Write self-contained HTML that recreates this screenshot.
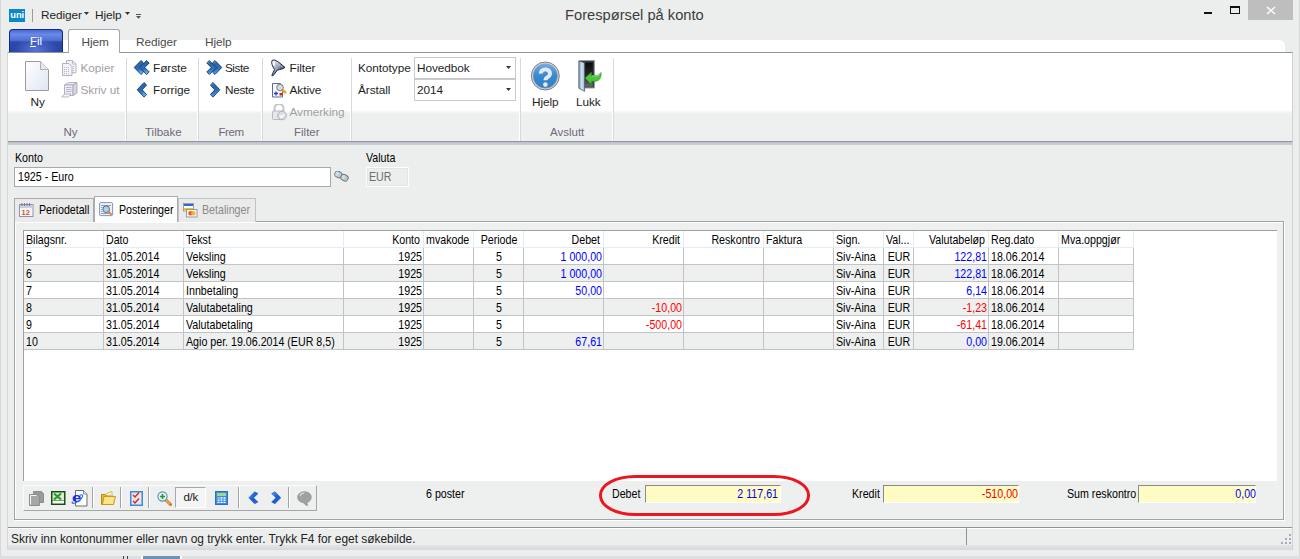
<!DOCTYPE html>
<html><head><meta charset="utf-8">
<style>
*{margin:0;padding:0;box-sizing:border-box}
html,body{width:1300px;height:559px;overflow:hidden;background:#eceeee}
body{position:relative;font-family:"Liberation Sans",sans-serif;color:#000}
.a{position:absolute}
.t{position:absolute;white-space:nowrap;line-height:1}
.r{font-size:11.8px;color:#1e1e1e;letter-spacing:-0.05px}
.g{font-size:12.4px;letter-spacing:0;color:#000;transform:scaleX(0.86);transform-origin:0 0}
.gr{transform-origin:100% 0}
.gc{transform-origin:50% 0}
.dis{color:#a39da6}
.lbl{font-size:11.5px;color:#6c6a78}
.sep{position:absolute;width:1px;background:#d6dadd;box-shadow:-1px 0 0 #fff}
</style></head><body>

<!-- window frame -->
<div class="a" style="left:0;top:0;width:1px;height:559px;background:#d6d8d8"></div>
<div class="a" style="left:7px;top:52px;width:1px;height:498px;background:#d4d7d8"></div>
<div class="a" style="left:1292px;top:52px;width:1px;height:498px;background:#cfd2d3"></div>

<!-- title bar -->
<svg class="a" style="left:9px;top:9px" width="16" height="13"><rect width="16" height="13" fill="#0a88cc"/><text x="1.2" y="9" font-family="Liberation Sans" font-size="8.2" font-weight="bold" textLength="14" lengthAdjust="spacingAndGlyphs" fill="#fff">uni</text></svg>

<div class="a" style="left:32px;top:9px;width:1px;height:13px;background:#9a9a9a"></div>
<div class="t r" style="left:41px;top:9.9px">Rediger</div>
<svg class="a" style="left:84px;top:12px" width="6" height="3"><path d="M0 0h5l-2.5 3z" fill="#333"/></svg>
<div class="t r" style="left:95px;top:9.9px">Hjelp</div>
<svg class="a" style="left:125px;top:12px" width="6" height="3"><path d="M0 0h5l-2.5 3z" fill="#333"/></svg>
<svg class="a" style="left:135.5px;top:14px" width="6" height="6"><path d="M0 0.5h5" stroke="#555" stroke-width="1"/><path d="M0 2h5l-2.5 2.8z" fill="#555"/></svg>
<div class="t" style="left:565px;top:8px;font-size:14.7px;color:#3c3c3c">Forespørsel på konto</div>
<div class="a" style="left:1204px;top:12px;width:8px;height:2px;background:#111"></div>
<div class="a" style="left:1230px;top:6px;width:10px;height:8px;border:1px solid #111;border-top-width:2px"></div>
<div class="a" style="left:1248px;top:0;width:45px;height:20px;background:#bebebe"></div>
<div class="a" style="left:1299px;top:0;width:1px;height:559px;background:#d4d6d6"></div>
<svg class="a" style="left:1266px;top:6px" width="10" height="9"><path d="M1 1l8 7M9 1l-8 7" stroke="#fff" stroke-width="1.4"/></svg>

<!-- tab strip -->
<div class="a" style="left:62px;top:40px;width:1223px;height:13px;background:#fff;border-top-right-radius:6px"></div>
<div class="a" style="left:9px;top:29px;width:54px;height:24px;border-radius:4px 4px 0 0;background:radial-gradient(ellipse 22px 14px at 50% 85%,rgba(90,120,220,0.9),rgba(90,120,220,0) 100%),linear-gradient(#4a6ad4 0%,#6a8ae6 20%,#4e6ed4 45%,#2c48a8 52%,#2a46a4 100%);border:1px solid #0c2a88;border-bottom:none"></div>
<div class="t" style="left:30px;top:36.3px;font-size:11.5px;color:#fff">Fil</div>
<div class="a" style="left:30px;top:46px;width:6px;height:1px;background:#fff"></div>
<div class="a" style="left:68px;top:29px;width:52px;height:24px;background:#fff;border:1px solid #a3a8ae;border-bottom:none;border-radius:3px 3px 0 0;z-index:2"></div>
<div class="t r" style="left:81.5px;top:36.8px;color:#4a4a4a;z-index:3">Hjem</div>
<div class="t r" style="left:136px;top:36.8px;color:#4a4a4a">Rediger</div>
<div class="t r" style="left:205px;top:36.8px;color:#4a4a4a">Hjelp</div>

<!-- ribbon body -->
<div class="a" style="left:8px;top:52px;width:1285px;height:90px;background:#fff;border-top:1px solid #8f979d;border-bottom:1px solid #8f979d;border-right:1px solid #d0d3d5"></div>
<div class="a" style="left:8px;top:111px;width:1284px;height:30px;background:linear-gradient(#fbfbfb 0px,#f2f3f3 1.5px,#eef0f0 3px,#eef0f0 100%)"></div>
<div class="a" style="left:8px;top:142px;width:1284px;height:3px;background:linear-gradient(#bcc1c9,#cdd1d7)"></div>
<div class="sep" style="left:126px;top:58px;height:83px"></div>
<div class="sep" style="left:198px;top:58px;height:83px"></div>
<div class="sep" style="left:262px;top:58px;height:83px"></div>
<div class="sep" style="left:351px;top:58px;height:83px"></div>
<div class="sep" style="left:520px;top:58px;height:83px"></div>
<div class="sep" style="left:613px;top:58px;height:83px"></div>

<!-- group Ny -->
<svg class="a" style="left:25px;top:61px" width="25" height="31"><defs><linearGradient id="dg" x1="0" y1="0" x2="1" y2="1"><stop offset="0" stop-color="#fff"/><stop offset="1" stop-color="#dfe6f2"/></linearGradient></defs><path d="M0.5 0.5h15l8 8v21h-23z" fill="url(#dg)" stroke="#9c9c9c"/><path d="M15.5 0.5v8h8" fill="#e6e9ee" stroke="#b0b0b0"/></svg>
<div class="t r" style="left:30.5px;top:97.2px">Ny</div>
<svg class="a" style="left:62px;top:60px" width="15" height="17"><path d="M4.5 0.5h6l3.5 3.5v8.8h-9.5z" fill="#f2f2f6" stroke="#b4b4c4"/><path d="M10.5 0.5v3.5h3.5" fill="none" stroke="#c0c0cc"/><path d="M0.5 3.5h6.5l3 3v9h-9.5z" fill="#f4f4f8" stroke="#b0b0c0"/><path d="M2 7.5h6M2 9.5h6M2 11.5h6M2 13.5h5" stroke="#b8b8c8" stroke-dasharray="1 1"/><path d="M11 6.5h2M11 8.5h2M11 10.5h2" stroke="#c0c0cc" stroke-dasharray="1 1"/></svg>
<div class="t r dis" style="left:80.5px;top:62.8px">Kopier</div>
<svg class="a" style="left:61px;top:82px" width="17" height="16"><path d="M3.5 3l4-2.5h8.5l-4 2.5z" fill="#e8e8ee" stroke="#b0b0c0" stroke-width="0.9"/><path d="M3.5 3h8.5v10.5h-8.5z" fill="#eeeef4" stroke="#a8a8bc" stroke-width="0.9"/><path d="M12 3l4-2.5v10.5l-4 2.5z" fill="#d6d6e0" stroke="#a8a8bc" stroke-width="0.9"/><path d="M5 5.5h5.5M5 7.5h5.5M5 9.5h5.5" stroke="#b8b8c8"/><path d="M0.8 15l2.7-3h6.5l-2.7 3z" fill="#f4f4f8" stroke="#b0b0c0" stroke-width="0.9"/></svg>
<div class="t r dis" style="left:80.5px;top:84.6px">Skriv ut</div>
<div class="t lbl" style="left:63.5px;top:127.3px">Ny</div>

<!-- group Tilbake -->
<svg class="a" style="left:133px;top:59px" width="19" height="18"><defs><linearGradient id="cg" x1="0" y1="0" x2="0.3" y2="1"><stop offset="0" stop-color="#8cb0d0"/><stop offset="0.3" stop-color="#2c64a8"/><stop offset="0.7" stop-color="#2a70c0"/><stop offset="1" stop-color="#64b0f0"/></linearGradient></defs><path d="M1.2 8.5L8 1.5L10.6 4L6.2 8.5L10.6 13L8 15.5Z" fill="url(#cg)" stroke="#143a6a" stroke-width="0.9" stroke-linejoin="round"/><path d="M6.8 8.5L13.6 1.5L16.2 4L11.8 8.5L16.2 13L13.6 15.5Z" fill="url(#cg)" stroke="#143a6a" stroke-width="0.9" stroke-linejoin="round"/></svg>
<div class="t r" style="left:153px;top:62.8px">Første</div>
<svg class="a" style="left:136px;top:81px" width="13" height="18"><path d="M1.2 8.8L8 1.5L10.6 4L6.2 8.8L10.6 13.6L8 16.1Z" fill="url(#cg)" stroke="#143a6a" stroke-width="0.9" stroke-linejoin="round"/></svg>
<div class="t r" style="left:153px;top:84.6px">Forrige</div>
<div class="t lbl" style="left:145px;top:127.3px">Tilbake</div>

<!-- group Frem -->
<svg class="a" style="left:205px;top:59px" width="19" height="18"><path d="M16.8 8.5L10 1.5L7.4 4L11.8 8.5L7.4 13L10 15.5Z" fill="url(#cg)" stroke="#143a6a" stroke-width="0.9" stroke-linejoin="round"/><path d="M11.2 8.5L4.4 1.5L1.8 4L6.2 8.5L1.8 13L4.4 15.5Z" fill="url(#cg)" stroke="#143a6a" stroke-width="0.9" stroke-linejoin="round"/></svg>
<div class="t r" style="left:225px;top:62.8px;letter-spacing:-0.5px">Siste</div>
<svg class="a" style="left:207.5px;top:81px" width="13" height="18"><path d="M11.8 8.8L5 1.5L2.4 4L6.8 8.8L2.4 13.6L5 16.1Z" fill="url(#cg)" stroke="#143a6a" stroke-width="0.9" stroke-linejoin="round"/></svg>
<div class="t r" style="left:225px;top:84.6px;letter-spacing:-0.3px">Neste</div>
<div class="t lbl" style="left:218.5px;top:127.3px;letter-spacing:-0.4px">Frem</div>

<!-- group Filter -->
<svg class="a" style="left:266px;top:56px" width="22" height="24"><defs><linearGradient id="fg" x1="0" y1="0" x2="1" y2="1"><stop offset="0" stop-color="#f4f6fa"/><stop offset="0.45" stop-color="#9aa6b8"/><stop offset="0.7" stop-color="#3a4866"/><stop offset="1" stop-color="#8896b0"/></linearGradient></defs><path d="M6 4.5C7.5 3.5 10 4 13 6.5C15.5 8.5 17.5 10 19 11.5C17.5 12.8 14.5 13.5 11.5 14L7 19.8L5.8 19.5L8.5 13.5C6.5 10.5 5 7 6 4.5Z" fill="url(#fg)" stroke="#1e2a44" stroke-width="1" stroke-linejoin="round"/><ellipse cx="7.8" cy="7.5" rx="1.1" ry="2.6" fill="#fff"/><path d="M10 6.5l7 5" stroke="#e8ecf4" stroke-width="0.8" stroke-dasharray="1 1"/></svg>
<div class="t r" style="left:289.5px;top:62.8px">Filter</div>
<svg class="a" style="left:272px;top:82px" width="16" height="16"><path d="M0.5 1.5h8l2 2v11.5h-10z" fill="#f6f8fc" stroke="#5a6c98"/><circle cx="8" cy="5.5" r="3.3" fill="#d8dadc" stroke="#7c7c7c"/><path d="M10.5 8l3.5 3" stroke="#f0a020" stroke-width="2.4"/><path d="M2 11.5h4M4 9.5v4" stroke="#2040e0" stroke-width="1.3"/><rect x="7.5" y="11" width="3" height="2.5" fill="#e02020"/></svg>
<div class="t r" style="left:289.5px;top:84.6px">Aktive</div>
<svg class="a" style="left:272px;top:104px" width="15" height="17"><path d="M2.5 7v-2.5a4.5 4.5 0 0 1 9 0v2.5" fill="none" stroke="#c4c4cc" stroke-width="2"/><rect x="0.5" y="7" width="11" height="8.5" rx="1" fill="#e6e6ec" stroke="#b8b8c4"/><circle cx="10" cy="11.5" r="4.3" fill="#dcdce2" stroke="#b0b0bc"/><path d="M7.8 11.5l1.7 1.8l2.6-3" stroke="#fff" stroke-width="1.3" fill="none"/></svg>
<div class="t r dis" style="left:289.5px;top:107.2px">Avmerking</div>
<div class="t lbl" style="left:294px;top:127.3px">Filter</div>

<!-- kontotype group -->
<div class="t r" style="left:358px;top:62.9px">Kontotype</div>
<div class="a" style="left:414px;top:57px;width:102px;height:22px;background:#fff;border:1px solid #c6cace"></div>
<div class="t r" style="left:417px;top:62.9px">Hovedbok</div>
<svg class="a" style="left:506px;top:66px" width="6" height="3"><path d="M0 0h5l-2.5 3z" fill="#333"/></svg>
<div class="t r" style="left:358px;top:84.5px">Årstall</div>
<div class="a" style="left:414px;top:79px;width:102px;height:22px;background:#fff;border:1px solid #c6cace"></div>
<div class="t r" style="left:417px;top:84.5px">2014</div>
<svg class="a" style="left:506px;top:88px" width="6" height="3"><path d="M0 0h5l-2.5 3z" fill="#333"/></svg>

<!-- Avslutt -->
<svg class="a" style="left:530.4px;top:60.8px" width="31" height="31"><defs><linearGradient id="hg" x1="0" y1="0" x2="0" y2="1"><stop offset="0" stop-color="#6eaee6"/><stop offset="0.5" stop-color="#3a86d0"/><stop offset="1" stop-color="#3080cc"/></linearGradient></defs><circle cx="15.3" cy="15" r="14" fill="#d0d4d8" stroke="#70747a" stroke-width="0.9"/><circle cx="15.3" cy="15" r="12.2" fill="url(#hg)" stroke="#9aa0a6" stroke-width="0.5"/><path d="M10.8 12.6a4.6 4.1 0 1 1 7.2 3.3c-1.7 1-2.6 1.6-2.6 3.4" fill="none" stroke="#e4eaf0" stroke-width="3.9"/><circle cx="15.4" cy="23.6" r="2.3" fill="#e4eaf0"/></svg>
<div class="t r" style="left:532px;top:97px">Hjelp</div>
<svg class="a" style="left:578px;top:59px" width="24" height="34"><defs><linearGradient id="dr" x1="0" y1="0" x2="1" y2="0"><stop offset="0" stop-color="#7c98b4"/><stop offset="0.5" stop-color="#cfe2f4"/><stop offset="1" stop-color="#9cb8d2"/></linearGradient><linearGradient id="di" x1="0" y1="0" x2="0" y2="1"><stop offset="0" stop-color="#0a0a0a"/><stop offset="0.6" stop-color="#2a2a2a"/><stop offset="1" stop-color="#6a6a6a"/></linearGradient></defs><path d="M1.5 1.5h15v27.5h-15z" fill="#3e4246" stroke="#9a9ea2" stroke-width="1"/><path d="M6 3.5h8.8v24h-8.8z" fill="url(#di)"/><path d="M0.8 2l5.8 1.8v28.5l-5.8-3z" fill="url(#dr)" stroke="#4a5a6a" stroke-width="0.8"/><path d="M7 19l6.5-5.8v3.3h4.5c1.8 0 3.8-1.2 5-3c0.8 4-1.5 8.8-5.5 8.8h-4v3.2z" fill="#4cc43c" stroke="#2a8a20" stroke-width="0.6"/><path d="M14 17h4c1.5 0 3.2-0.8 4.3-2" fill="none" stroke="#a0f090" stroke-width="0.8"/></svg>
<div class="t r" style="left:576px;top:97px">Lukk</div>
<div class="t lbl" style="left:550px;top:127.3px">Avslutt</div>

<!-- form -->
<div class="t g" style="left:14.5px;top:151.8px">Konto</div>
<div class="a" style="left:14px;top:167px;width:317px;height:20px;background:#fff;border:1px solid #a6a9ab"></div>
<div class="t g" style="left:17.7px;top:170.9px">1925 - Euro</div>
<svg class="a" style="left:333px;top:171px" width="17" height="12"><g transform="rotate(28 8 6)"><rect x="1" y="2" width="7" height="6" rx="2.5" fill="#c8c8c8" stroke="#6a6a6a" stroke-width="0.9"/><rect x="8" y="2" width="7" height="6" rx="2.5" fill="#c8c8c8" stroke="#6a6a6a" stroke-width="0.9"/><ellipse cx="3" cy="5" rx="1.6" ry="2.2" fill="#bfe4f4"/><ellipse cx="10" cy="5" rx="1.6" ry="2.2" fill="#bfe4f4"/></g></svg>
<div class="t g" style="left:366px;top:151.8px">Valuta</div>
<div class="a" style="left:366px;top:167px;width:43px;height:20px;background:#eceeee;border:1px solid #fdfdfd;outline:1px solid #e2e4e6;outline-offset:-2px"></div>
<div class="t g" style="left:369px;top:170.9px;color:#6c6c6c">EUR</div>

<!-- tabs -->
<div class="a" style="left:14px;top:221px;width:1270px;height:299px;border:1px solid #a0a4a6;background:#eef0f0;box-shadow:inset 1px 1px 0 #fff,1px 1px 0 #fff"></div>
<div class="a" style="left:14px;top:198px;width:80px;height:24px;background:#eaeaea;border:1px solid #a9abac;border-bottom:none"></div>
<div class="a" style="left:94px;top:196px;width:84px;height:26px;background:#fcfcfc;border:1px solid #a9abac;border-bottom:none;z-index:2"></div>
<div class="a" style="left:178px;top:198px;width:78px;height:24px;background:#eaeaea;border:1px solid #c0c2c3;border-bottom:none"></div>
<svg class="a" style="left:19px;top:202px" width="15" height="15"><rect x="0.5" y="2.5" width="13.5" height="12" fill="#f4f6fa" stroke="#8a94b0"/><rect x="1" y="3" width="12.5" height="3" fill="#c8d0e0"/><path d="M3 1v3M5.5 1v3M8 1v3M10.5 1v3" stroke="#606a80" stroke-width="0.8"/><text x="2.6" y="13" font-size="7.5" font-weight="bold" fill="#e0501c" font-family="Liberation Sans">12</text></svg>
<div class="t g" style="left:38.6px;top:204.3px">Periodetall</div>
<svg class="a" style="left:99px;top:202px;z-index:3" width="15" height="15"><rect x="0.6" y="0.6" width="13" height="13" rx="1.2" fill="#eef2f8" stroke="#6a8cc0" stroke-width="0.9"/><path d="M2 3.5h10M2 5.5h1.5M2 7.5h1.5M2 9.5h1.5M2 11.5h10" stroke="#707888" stroke-width="0.7"/><circle cx="7.2" cy="7.2" r="3.3" fill="#a8d4f0" stroke="#606870" stroke-width="1"/><path d="M9.6 9.6l3.2 3.2" stroke="#f07a30" stroke-width="1.8"/></svg>
<div class="t g" style="left:118.8px;top:204.3px;z-index:3">Posteringer</div>
<svg class="a" style="left:183px;top:203px" width="15" height="15"><rect x="0.5" y="0.5" width="10" height="7.5" fill="#fff" stroke="#8a8a8a" stroke-width="0.8"/><rect x="1" y="1" width="9" height="2" fill="#2a6ad8"/><rect x="1" y="5" width="9" height="2.5" fill="#f0c020"/><rect x="3.5" y="6.5" width="10.5" height="7.5" fill="#f4f4f4" stroke="#8a8a8a" stroke-width="0.8"/><circle cx="7.5" cy="10.2" r="2.2" fill="#f05a20"/><circle cx="10.2" cy="10.2" r="2.2" fill="#f4b020" fill-opacity="0.9"/></svg>
<div class="t g" style="left:202.3px;top:204.3px;color:#8a8a8a">Betalinger</div>

<!-- grid -->
<div class="a" style="left:23px;top:230px;width:1254px;height:251px;background:#fff;border-top:1px solid #a0a0a0;border-left:1px solid #a0a0a0"></div>
<!--GRID-->
<div class="a" style="left:24px;top:248px;width:1109px;height:16px;background:#fff"></div>
<div class="a" style="left:24px;top:264px;width:1110px;height:1px;background:#c3c3c3"></div>
<div class="a" style="left:24px;top:265px;width:1109px;height:16px;background:#eef0f0"></div>
<div class="a" style="left:24px;top:281px;width:1110px;height:1px;background:#c3c3c3"></div>
<div class="a" style="left:24px;top:282px;width:1109px;height:16px;background:#fff"></div>
<div class="a" style="left:24px;top:298px;width:1110px;height:1px;background:#c3c3c3"></div>
<div class="a" style="left:24px;top:299px;width:1109px;height:16px;background:#eef0f0"></div>
<div class="a" style="left:24px;top:315px;width:1110px;height:1px;background:#c3c3c3"></div>
<div class="a" style="left:24px;top:316px;width:1109px;height:16px;background:#fff"></div>
<div class="a" style="left:24px;top:332px;width:1110px;height:1px;background:#c3c3c3"></div>
<div class="a" style="left:24px;top:333px;width:1109px;height:16px;background:#eef0f0"></div>
<div class="a" style="left:24px;top:349px;width:1110px;height:1px;background:#c3c3c3"></div>
<div class="a" style="left:24px;top:247px;width:1110px;height:1px;background:#e3ebf6"></div>
<div class="a" style="left:103px;top:231px;width:1px;height:16px;background:#e3ebf6"></div>
<div class="a" style="left:103px;top:248px;width:1px;height:102px;background:#c3c3c3"></div>
<div class="a" style="left:183px;top:231px;width:1px;height:16px;background:#e3ebf6"></div>
<div class="a" style="left:183px;top:248px;width:1px;height:102px;background:#c3c3c3"></div>
<div class="a" style="left:343px;top:231px;width:1px;height:16px;background:#e3ebf6"></div>
<div class="a" style="left:343px;top:248px;width:1px;height:102px;background:#c3c3c3"></div>
<div class="a" style="left:423px;top:231px;width:1px;height:16px;background:#e3ebf6"></div>
<div class="a" style="left:423px;top:248px;width:1px;height:102px;background:#c3c3c3"></div>
<div class="a" style="left:473px;top:231px;width:1px;height:16px;background:#e3ebf6"></div>
<div class="a" style="left:473px;top:248px;width:1px;height:102px;background:#c3c3c3"></div>
<div class="a" style="left:523px;top:231px;width:1px;height:16px;background:#e3ebf6"></div>
<div class="a" style="left:523px;top:248px;width:1px;height:102px;background:#c3c3c3"></div>
<div class="a" style="left:603px;top:231px;width:1px;height:16px;background:#e3ebf6"></div>
<div class="a" style="left:603px;top:248px;width:1px;height:102px;background:#c3c3c3"></div>
<div class="a" style="left:683px;top:231px;width:1px;height:16px;background:#e3ebf6"></div>
<div class="a" style="left:683px;top:248px;width:1px;height:102px;background:#c3c3c3"></div>
<div class="a" style="left:763px;top:231px;width:1px;height:16px;background:#e3ebf6"></div>
<div class="a" style="left:763px;top:248px;width:1px;height:102px;background:#c3c3c3"></div>
<div class="a" style="left:833px;top:231px;width:1px;height:16px;background:#e3ebf6"></div>
<div class="a" style="left:833px;top:248px;width:1px;height:102px;background:#c3c3c3"></div>
<div class="a" style="left:883px;top:231px;width:1px;height:16px;background:#e3ebf6"></div>
<div class="a" style="left:883px;top:248px;width:1px;height:102px;background:#c3c3c3"></div>
<div class="a" style="left:913px;top:231px;width:1px;height:16px;background:#e3ebf6"></div>
<div class="a" style="left:913px;top:248px;width:1px;height:102px;background:#c3c3c3"></div>
<div class="a" style="left:988px;top:231px;width:1px;height:16px;background:#e3ebf6"></div>
<div class="a" style="left:988px;top:248px;width:1px;height:102px;background:#c3c3c3"></div>
<div class="a" style="left:1058px;top:231px;width:1px;height:16px;background:#e3ebf6"></div>
<div class="a" style="left:1058px;top:248px;width:1px;height:102px;background:#c3c3c3"></div>
<div class="a" style="left:1133px;top:231px;width:1px;height:16px;background:#e3ebf6"></div>
<div class="a" style="left:1133px;top:248px;width:1px;height:102px;background:#c3c3c3"></div>
<div class="t g" style="top:233.5px;left:26px;">Bilagsnr.</div>
<div class="t g" style="top:233.5px;left:106px;">Dato</div>
<div class="t g" style="top:233.5px;left:186px;">Tekst</div>
<div class="t g gr" style="top:233.5px;left:343px;width:77px;text-align:right;">Konto</div>
<div class="t g" style="top:233.5px;left:426px;">mvakode</div>
<div class="t g gc" style="top:233.5px;left:474px;width:50px;text-align:center;">Periode</div>
<div class="t g gr" style="top:233.5px;left:523px;width:77px;text-align:right;">Debet</div>
<div class="t g gr" style="top:233.5px;left:603px;width:77px;text-align:right;">Kredit</div>
<div class="t g gr" style="top:233.5px;left:683px;width:77px;text-align:right;">Reskontro</div>
<div class="t g" style="top:233.5px;left:766px;">Faktura</div>
<div class="t g" style="top:233.5px;left:836px;">Sign.</div>
<div class="t g" style="top:233.5px;left:886px;">Val...</div>
<div class="t g gr" style="top:233.5px;left:913px;width:72px;text-align:right;">Valutabeløp</div>
<div class="t g" style="top:233.5px;left:991px;">Reg.dato</div>
<div class="t g" style="top:233.5px;left:1061px;">Mva.oppgjør</div>
<div class="t g" style="top:251.2px;left:26px;">5</div>
<div class="t g" style="top:251.2px;left:106px;">31.05.2014</div>
<div class="t g" style="top:251.2px;left:186px;">Veksling</div>
<div class="t g gr" style="top:251.2px;left:343px;width:79px;text-align:right;">1925</div>
<div class="t g gc" style="top:251.2px;left:474px;width:50px;text-align:center;">5</div>
<div class="t g gr" style="top:251.2px;left:523px;width:79px;text-align:right;color:#0000ff;">1 000,00</div>
<div class="t g" style="top:251.2px;left:836px;">Siv-Aina</div>
<div class="t g gc" style="top:251.2px;left:884px;width:30px;text-align:center;">EUR</div>
<div class="t g gr" style="top:251.2px;left:913px;width:74px;text-align:right;color:#0000ff;">122,81</div>
<div class="t g" style="top:251.2px;left:991px;">18.06.2014</div>
<div class="t g" style="top:268.2px;left:26px;">6</div>
<div class="t g" style="top:268.2px;left:106px;">31.05.2014</div>
<div class="t g" style="top:268.2px;left:186px;">Veksling</div>
<div class="t g gr" style="top:268.2px;left:343px;width:79px;text-align:right;">1925</div>
<div class="t g gc" style="top:268.2px;left:474px;width:50px;text-align:center;">5</div>
<div class="t g gr" style="top:268.2px;left:523px;width:79px;text-align:right;color:#0000ff;">1 000,00</div>
<div class="t g" style="top:268.2px;left:836px;">Siv-Aina</div>
<div class="t g gc" style="top:268.2px;left:884px;width:30px;text-align:center;">EUR</div>
<div class="t g gr" style="top:268.2px;left:913px;width:74px;text-align:right;color:#0000ff;">122,81</div>
<div class="t g" style="top:268.2px;left:991px;">18.06.2014</div>
<div class="t g" style="top:285.2px;left:26px;">7</div>
<div class="t g" style="top:285.2px;left:106px;">31.05.2014</div>
<div class="t g" style="top:285.2px;left:186px;">Innbetaling</div>
<div class="t g gr" style="top:285.2px;left:343px;width:79px;text-align:right;">1925</div>
<div class="t g gc" style="top:285.2px;left:474px;width:50px;text-align:center;">5</div>
<div class="t g gr" style="top:285.2px;left:523px;width:79px;text-align:right;color:#0000ff;">50,00</div>
<div class="t g" style="top:285.2px;left:836px;">Siv-Aina</div>
<div class="t g gc" style="top:285.2px;left:884px;width:30px;text-align:center;">EUR</div>
<div class="t g gr" style="top:285.2px;left:913px;width:74px;text-align:right;color:#0000ff;">6,14</div>
<div class="t g" style="top:285.2px;left:991px;">18.06.2014</div>
<div class="t g" style="top:302.2px;left:26px;">8</div>
<div class="t g" style="top:302.2px;left:106px;">31.05.2014</div>
<div class="t g" style="top:302.2px;left:186px;">Valutabetaling</div>
<div class="t g gr" style="top:302.2px;left:343px;width:79px;text-align:right;">1925</div>
<div class="t g gc" style="top:302.2px;left:474px;width:50px;text-align:center;">5</div>
<div class="t g gr" style="top:302.2px;left:603px;width:79px;text-align:right;color:#ff0000;">-10,00</div>
<div class="t g" style="top:302.2px;left:836px;">Siv-Aina</div>
<div class="t g gc" style="top:302.2px;left:884px;width:30px;text-align:center;">EUR</div>
<div class="t g gr" style="top:302.2px;left:913px;width:74px;text-align:right;color:#ff0000;">-1,23</div>
<div class="t g" style="top:302.2px;left:991px;">18.06.2014</div>
<div class="t g" style="top:319.2px;left:26px;">9</div>
<div class="t g" style="top:319.2px;left:106px;">31.05.2014</div>
<div class="t g" style="top:319.2px;left:186px;">Valutabetaling</div>
<div class="t g gr" style="top:319.2px;left:343px;width:79px;text-align:right;">1925</div>
<div class="t g gc" style="top:319.2px;left:474px;width:50px;text-align:center;">5</div>
<div class="t g gr" style="top:319.2px;left:603px;width:79px;text-align:right;color:#ff0000;">-500,00</div>
<div class="t g" style="top:319.2px;left:836px;">Siv-Aina</div>
<div class="t g gc" style="top:319.2px;left:884px;width:30px;text-align:center;">EUR</div>
<div class="t g gr" style="top:319.2px;left:913px;width:74px;text-align:right;color:#ff0000;">-61,41</div>
<div class="t g" style="top:319.2px;left:991px;">18.06.2014</div>
<div class="t g" style="top:336.2px;left:26px;">10</div>
<div class="t g" style="top:336.2px;left:106px;">31.05.2014</div>
<div class="t g" style="top:336.2px;left:186px;">Agio per. 19.06.2014 (EUR 8,5)</div>
<div class="t g gr" style="top:336.2px;left:343px;width:79px;text-align:right;">1925</div>
<div class="t g gc" style="top:336.2px;left:474px;width:50px;text-align:center;">5</div>
<div class="t g gr" style="top:336.2px;left:523px;width:79px;text-align:right;color:#0000ff;">67,61</div>
<div class="t g" style="top:336.2px;left:836px;">Siv-Aina</div>
<div class="t g gc" style="top:336.2px;left:884px;width:30px;text-align:center;">EUR</div>
<div class="t g gr" style="top:336.2px;left:913px;width:74px;text-align:right;color:#0000ff;">0,00</div>
<div class="t g" style="top:336.2px;left:991px;">19.06.2014</div>
<!--/GRID-->

<!-- bottom toolbar -->
<div class="a" style="left:23px;top:485px;width:294px;height:26px;border-top:1px solid #fbfbfb;border-left:1px solid #fbfbfb;border-bottom:1px solid #a4a6a8;border-right:1px solid #a4a6a8"></div>
<svg class="a" style="left:29px;top:491px" width="15" height="15"><path d="M4.5 0.5h8l2 2v9h-10z" fill="#9a9a9a" stroke="#8c8c8c"/><path d="M0.5 3.5h8l2 2v9h-10z" fill="#a6a6a6" stroke="#8c8c8c"/><path d="M1.5 13.5v-9h6" fill="none" stroke="#fff" stroke-width="0.9"/></svg>
<svg class="a" style="left:51px;top:491px" width="15" height="14"><rect x="0.5" y="0.5" width="13.5" height="13" fill="#1e5a1e" stroke="#174a17"/><rect x="1.5" y="1.5" width="11.5" height="8" fill="#d8ecd0"/><path d="M3 2.5l7 6M10 2.5l-7 6" stroke="#2a9a2a" stroke-width="2.2"/><rect x="1.5" y="10" width="11.5" height="2.5" fill="#f4f8f4"/></svg>
<svg class="a" style="left:71px;top:490px" width="17" height="17"><path d="M4.5 0.5h8l3.5 3.5v12h-11.5z" fill="#fff" stroke="#6c6c6c"/><path d="M12.5 0.5v3.5h3.5" fill="#e4e4e4" stroke="#8c8c8c"/><text x="0" y="0" transform="translate(1 12) scale(1.35 1)" font-size="12.5" font-weight="bold" fill="#1030e8" font-family="Liberation Sans">e</text><path d="M1.5 11.5c-1.2 1.8 0.8 2.5 3.5 1.2c2.8-1.4 5.5-4 6.5-6c0.8-1.8-0.8-2.3-2.8-1.5" fill="none" stroke="#2a70f4" stroke-width="1.2"/><path d="M2 12l2 1" stroke="#f0c020" stroke-width="1"/></svg>
<div class="a" style="left:92px;top:487px;width:1px;height:21px;background:#a0a2a4;border-right:1px solid #fff;box-sizing:content-box"></div>
<svg class="a" style="left:101px;top:491px" width="15" height="14"><path d="M0.5 3.5h4l1.5 1.5h6v8.5h-11.5z" fill="#e8b830" stroke="#b88a10"/><path d="M3 5.5h11.5l-2 8h-11z" fill="#fbe48a" stroke="#c89a20"/><path d="M5 2.5l6-2v4" fill="#fff2c0" stroke="#c89a20" stroke-width="0.6"/></svg>
<div class="a" style="left:120px;top:487px;width:1px;height:21px;background:#a0a2a4;border-right:1px solid #fff;box-sizing:content-box"></div>
<svg class="a" style="left:130px;top:491px" width="13" height="15"><rect x="0.75" y="0.75" width="11.5" height="13.5" fill="#e8e6e2" stroke="#3a8ae0" stroke-width="1.5"/><path d="M3 4l2 2l4-4.5M3 10l2 2l4-4.5" fill="none" stroke="#e02020" stroke-width="1.3"/></svg>
<div class="a" style="left:148px;top:487px;width:1px;height:21px;background:#a0a2a4;border-right:1px solid #fff;box-sizing:content-box"></div>
<svg class="a" style="left:157px;top:491px" width="15" height="15"><path d="M8 8l5.5 5.5" stroke="#d87020" stroke-width="3" stroke-linecap="round"/><path d="M8.5 8.5l4.5 4.5" stroke="#f8b050" stroke-width="1.2"/><circle cx="5.5" cy="5.5" r="4.6" fill="#dff0fa" stroke="#5a8cb0" stroke-width="1.1"/><path d="M3 5.5h5M5.5 3v5" stroke="#20a020" stroke-width="1.6"/></svg>
<div class="a" style="left:175px;top:487px;width:31px;height:21px;background:#f5f5f5;border-top:1px solid #a8a8a8;border-left:1px solid #a8a8a8;border-bottom:1px solid #fff;border-right:1px solid #fff"></div>
<div class="t" style="left:183.5px;top:492px;font-size:11.5px;color:#1a1a1a;letter-spacing:-0.3px">d/k</div>
<svg class="a" style="left:215px;top:491px" width="13" height="14"><rect x="0.5" y="0.5" width="12" height="13" fill="#3a8ee0" stroke="#2c70c0"/><rect x="2" y="2" width="9" height="3" fill="#9ed88a"/><path d="M2.5 7h2M5.5 7h2M8.5 7h2M2.5 9.2h2M5.5 9.2h2M8.5 9.2h2M2.5 11.4h2M5.5 11.4h2M8.5 11.4h2" stroke="#fff" stroke-width="1.3"/><rect x="2" y="6.5" width="2" height="1" fill="#f06040"/></svg>
<div class="a" style="left:238px;top:487px;width:1px;height:21px;background:#a0a2a4;border-right:1px solid #fff;box-sizing:content-box"></div>
<svg class="a" style="left:248px;top:491px" width="12" height="14"><defs><linearGradient id="ag" x1="0" y1="0" x2="1" y2="1"><stop offset="0" stop-color="#5aa8f4"/><stop offset="0.5" stop-color="#1a5cd0"/><stop offset="1" stop-color="#2a70e0"/></linearGradient></defs><path d="M0.8 6.8L6.6 0.8L10 2.6L5.6 6.8L10 11L6.6 12.8Z" fill="url(#ag)" stroke="#1448b0" stroke-width="0.5"/></svg>
<svg class="a" style="left:270px;top:491px" width="12" height="14"><path d="M10.8 6.8L5 0.8L1.6 2.6L6 6.8L1.6 11L5 12.8Z" fill="url(#ag)" stroke="#1448b0" stroke-width="0.5"/></svg>
<div class="a" style="left:288px;top:487px;width:1px;height:21px;background:#a0a2a4;border-right:1px solid #fff;box-sizing:content-box"></div>
<svg class="a" style="left:297px;top:491px" width="15" height="15"><path d="M7.5 0.8c4 0 6.7 2.3 6.7 5.5c0 2.6-1.8 4.5-4.3 5.2c0 1.3 0.3 2.2 1 2.8c-2 0-3.5-1-4.2-2.6c-3.5-0.3-6-2.5-6-5.4c0-3.2 2.8-5.5 6.8-5.5z" fill="#a0a0a0" stroke="#909090" stroke-width="0.8"/><path d="M3 5c0.5-2 2.5-3 4.5-3" fill="none" stroke="#e4e4e4" stroke-width="1.2"/></svg>

<!-- totals -->
<div class="t g" style="left:426px;top:488px">6 poster</div>
<div class="t g" style="left:611.8px;top:488px">Debet</div>
<div class="a" style="left:645px;top:485px;width:136px;height:18px;background:#fefcc4;border-top:1px solid #8a8a8a;border-left:1px solid #8a8a8a;border-right:1px solid #fff;border-bottom:1px solid #fff"></div>
<div class="t g gr" style="left:645px;top:488px;width:133px;text-align:right;color:#0000f0">2 117,61</div>
<div class="t g" style="left:851.5px;top:488px">Kredit</div>
<div class="a" style="left:883px;top:485px;width:136px;height:18px;background:#fefcc4;border-top:1px solid #8a8a8a;border-left:1px solid #8a8a8a;border-right:1px solid #fff;border-bottom:1px solid #fff"></div>
<div class="t g gr" style="left:883px;top:488px;width:135px;text-align:right;color:#f00000">-510,00</div>
<div class="t g" style="left:1067px;top:488px">Sum reskontro</div>
<div class="a" style="left:1138px;top:485px;width:118px;height:18px;background:#fefcc4;border-top:1px solid #8a8a8a;border-left:1px solid #8a8a8a;border-right:1px solid #fff;border-bottom:1px solid #fff"></div>
<div class="t g gr" style="left:1138px;top:488px;width:118px;text-align:right;color:#0000f0">0,00</div>
<div class="a" style="left:598.5px;top:475px;width:211px;height:40.5px;border:3px solid #ec1620;border-radius:36px/20px"></div>

<!-- status bar -->
<div class="a" style="left:8px;top:527px;width:1284px;height:1px;background:#8c9296"></div>
<div class="a" style="left:8px;top:528px;width:1284px;height:1px;background:#fff"></div>
<div class="t r" style="left:11px;top:534px;font-size:11.9px;color:#222;z-index:5;letter-spacing:0">Skriv inn kontonummer eller navn og trykk enter. Trykk F4 for eget søkebilde.</div>
<div class="a" style="left:966px;top:528px;width:1px;height:21px;background:#8c9296"></div>
<div class="a" style="left:8px;top:545px;width:1284px;height:5px;background:linear-gradient(#e2e5e8,#d6d9dc)"></div>
<div class="a" style="left:0;top:556px;width:1300px;height:3px;background:#dde0e3"></div>
<div class="a" style="left:123px;top:556px;width:1px;height:3px;background:#404040"></div>
<div class="a" style="left:127px;top:556px;width:1px;height:3px;background:#404040"></div>
<div class="a" style="left:141px;top:556px;width:41px;height:3px;background:#fff"></div>
<div class="a" style="left:143px;top:556px;width:37px;height:3px;background:#6d93b8"></div>
<svg class="a" style="left:1281px;top:534px" width="12" height="12"><g fill="#a8aac0"><rect x="8" y="0" width="2" height="2"/><rect x="4" y="4" width="2" height="2"/><rect x="8" y="4" width="2" height="2"/><rect x="0" y="8" width="2" height="2"/><rect x="4" y="8" width="2" height="2"/><rect x="8" y="8" width="2" height="2"/></g></svg>

</body></html>
